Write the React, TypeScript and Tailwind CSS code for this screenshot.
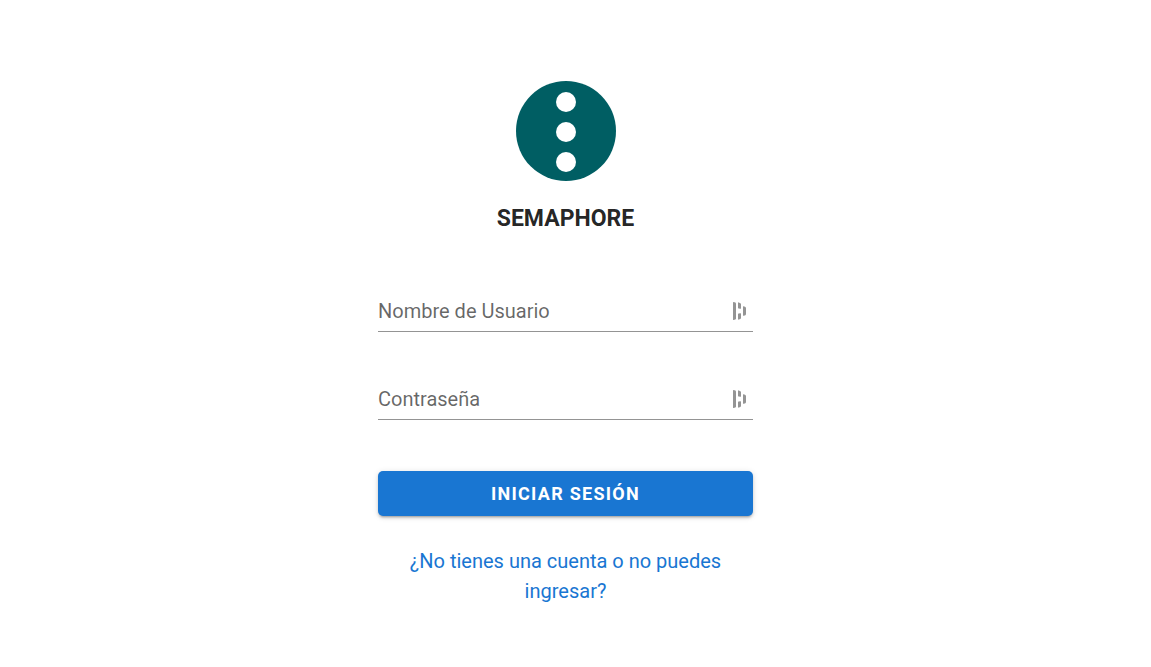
import React from "react";

function ManagerIcon() {
  return (
    <svg width="14" height="18" viewBox="0 0 14 18" fill="#949494" aria-hidden="true">
      <path d="M0 0.6Q0 0 0.6 0Q3 0.3 3 1.3V16.7Q3 17.7 0.6 18Q0 18 0 17.4Z" />
      <path d="M5 0.9Q5 0.2 5.8 0.4Q8 1 8 2V6.3Q8 6.9 7.4 6.8L5.6 6.5Q5 6.3 5 5.8Z" />
      <path d="M5 12.2Q5 11.7 5.6 11.5L7.4 11.2Q8 11.1 8 11.7V16Q8 17 5.8 17.6Q5 17.8 5 17.1Z" />
      <path d="M10 4.7Q10 4 10.8 4.2Q13 4.8 13 5.8V12.2Q13 13.2 10.8 13.8Q10 14 10 13.3Z" />
    </svg>
  );
}

function Field({ id, label, type }: { id: string; label: string; type: string }) {
  return (
    <div className="flex h-10 items-center border-b border-[#949494] pr-1.5 pb-0.5">
      <div className="grid min-w-0 flex-1 items-center">
        <input
          id={id}
          type={type}
          placeholder=" "
          className="peer col-start-1 row-start-1 h-8 w-full min-w-0 bg-transparent text-xl text-black/87 outline-none"
        />
        <label
          htmlFor={id}
          className="col-start-1 row-start-1 text-xl leading-8 text-black/60 peer-[:not(:placeholder-shown)]:invisible"
        >
          {label}
        </label>
      </div>
      <ManagerIcon />
    </div>
  );
}

export default function App() {
  return (
    <main className="flex min-h-screen justify-center bg-white px-4 pt-[81px] pr-9 font-['Roboto',sans-serif]">
      <form className="flex w-full max-w-[375px] flex-col" onSubmit={(e) => e.preventDefault()}>
        <svg className="self-center" width="100" height="100" viewBox="0 0 100 100" role="img" aria-label="Semaphore">
          <circle cx="50" cy="50" r="50" fill="#005e63" />
          <circle cx="50" cy="21" r="10" fill="#fff" />
          <circle cx="50" cy="51" r="10" fill="#fff" />
          <circle cx="50" cy="81" r="10" fill="#fff" />
        </svg>
        <h1 className="mt-5 text-center text-[23px] leading-9 font-bold text-black/87">SEMAPHORE</h1>
        <div className="mt-[55px] flex flex-col gap-12">
          <Field id="username" label="Nombre de Usuario" type="text" />
          <Field id="password" label="Contraseña" type="password" />
        </div>
        <button
          type="submit"
          className="mt-[51px] h-[45px] rounded-[5px] bg-[#1976d2] text-lg font-bold tracking-[0.07em] text-white shadow-[0_3px_2px_-2px_rgb(0_0_0/0.2),0_2px_3px_rgb(0_0_0/0.14),0_1px_6px_rgb(0_0_0/0.12)]"
        >
          INICIAR SESIÓN
        </button>
        <a href="#account" className="mt-[30px] text-center text-xl leading-[30px] text-[#1976d2]">
          ¿No tienes una cuenta o no puedes ingresar?
        </a>
      </form>
    </main>
  );
}
